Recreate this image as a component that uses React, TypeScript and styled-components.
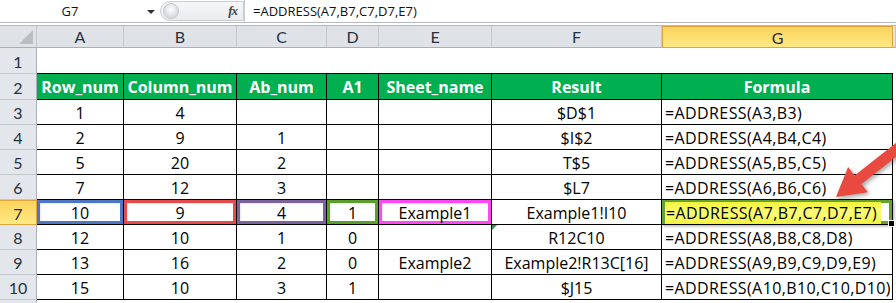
import styled, { createGlobalStyle, css } from "styled-components";

const GlobalStyle = createGlobalStyle`
  html, body {
    margin: 0;
    padding: 0;
    background: #ffffff;
    overflow: hidden;
  }
  body {
    font-family: "Open Sans", Lato, sans-serif;
  }
`;

type CellValue = string | number;

interface Row {
  num: number;
  cells: CellValue[];
}

const COLUMNS = ["A", "B", "C", "D", "E", "F", "G"];
const HEADINGS = ["Row_num", "Column_num", "Ab_num", "A1", "Sheet_name", "Result", "Formula"];

const ROWS: Row[] = [
  { num: 3, cells: [1, 4, "", "", "", "$D$1", "=ADDRESS(A3,B3)"] },
  { num: 4, cells: [2, 9, 1, "", "", "$I$2", "=ADDRESS(A4,B4,C4)"] },
  { num: 5, cells: [5, 20, 2, "", "", "T$5", "=ADDRESS(A5,B5,C5)"] },
  { num: 6, cells: [7, 12, 3, "", "", "$L7", "=ADDRESS(A6,B6,C6)"] },
  { num: 7, cells: [10, 9, 4, 1, "Example1", "Example1!I10", "=ADDRESS(A7,B7,C7,D7,E7)"] },
  { num: 8, cells: [12, 10, 1, 0, "", "R12C10", "=ADDRESS(A8,B8,C8,D8)"] },
  { num: 9, cells: [13, 16, 2, 0, "Example2", "Example2!R13C[16]", "=ADDRESS(A9,B9,C9,D9,E9)"] },
  { num: 10, cells: [15, 10, 3, 1, "", "$J15", "=ADDRESS(A10,B10,C10,D10)"] },
];

// outline colours for the argument cells of row 7
const RINGS: Record<number, string> = {
  0: "#4d76c4",
  1: "#e64a4a",
  2: "#7d62a0",
  3: "#5a9f2a",
  4: "#ff47f5",
};

const Window = styled.div`
  position: relative;
  width: 896px;
  height: 303px;
  overflow: hidden;
  background: #ffffff;
`;

const FormulaBar = styled.div`
  display: flex;
  height: 22px;
  border-bottom: 1px solid #b6bac0;
  background: #ffffff;
`;

const NameBox = styled.div`
  position: relative;
  width: 160px;
  display: flex;
  align-items: center;
  justify-content: center;
  padding-right: 20px;
  box-sizing: border-box;
  font-size: 13px;
  color: #111;
`;

const DropArrow = styled.span`
  position: absolute;
  right: 5px;
  top: 10px;
  width: 0;
  height: 0;
  border-left: 4px solid transparent;
  border-right: 4px solid transparent;
  border-top: 4px solid #333;
`;

const FxPill = styled.div`
  width: 84px;
  margin: 1px 0;
  display: flex;
  align-items: center;
  justify-content: space-between;
  padding: 0 6px 0 2px;
  box-sizing: border-box;
  border: 1px solid #c9ccd0;
  border-radius: 11px 0 0 11px;
  background: linear-gradient(#f6f7f8, #e9ebee);
`;

const Knob = styled.span`
  width: 14px;
  height: 14px;
  border-radius: 50%;
  background: radial-gradient(circle at 50% 40%, #ffffff, #d6d9dd 70%);
  border: 1px solid #c4c7cb;
`;

const Fx = styled.span`
  font-family: "Liberation Serif", serif;
  font-style: italic;
  font-weight: bold;
  font-size: 13px;
  color: #444;
  letter-spacing: -1px;
`;

const FormulaInput = styled.div`
  flex: 1;
  display: flex;
  align-items: center;
  padding-left: 8px;
  border-left: 1px solid #c9ccd0;
  font-size: 13px;
  color: #111;
`;

const Gap = styled.div`
  height: 2px;
  border-bottom: 1px solid #b6bac0;
`;

const Grid = styled.div`
  display: grid;
  grid-template-columns: 37px 87px 113px 90px 52px 113px 170px 231px 3px;
  grid-template-rows: 22px 26px 26px repeat(9, 25px);
`;

const selectedHead = css`
  background: linear-gradient(#fcd35c, #ffe985);
  border-color: #e0a53c;
  color: #1f2a36;
`;

const Corner = styled.div`
  position: relative;
  background: #dfe3e8;
  border-right: 1px solid #c3c8ce;
  border-bottom: 1px solid #a9afb6;
  &::after {
    content: "";
    position: absolute;
    right: 3px;
    bottom: 3px;
    border-left: 14px solid transparent;
    border-bottom: 14px solid #b9bec5;
  }
`;

const ColHead = styled.div<{ $active?: boolean }>`
  display: flex;
  align-items: center;
  justify-content: center;
  background: #dfe3e8;
  border-right: 1px solid #c3c8ce;
  border-bottom: 1px solid #a9afb6;
  font-family: Lato, sans-serif;
  font-size: 16px;
  color: #27313d;
  ${(p) => p.$active && selectedHead}
  ${(p) => p.$active && "border: 1px solid #e0a53c;"}
`;

const RowHead = styled.div<{ $active?: boolean }>`
  display: flex;
  align-items: center;
  justify-content: center;
  padding-top: 1px;
  background: #e3e6ea;
  border-right: 1px solid #a9afb6;
  border-bottom: 1px solid #c3c8ce;
  font-family: Lato, sans-serif;
  font-size: 16px;
  color: #27313d;
  ${(p) => p.$active && selectedHead}
  ${(p) => p.$active && "border-top: 1px solid #e0a53c; border-bottom: 1px solid #e0a53c;"}
`;

const Blank = styled.div<{ $edge?: boolean }>`
  background: #ffffff;
  ${(p) => p.$edge && "border-bottom: 1px solid #000;"}
`;

const Heading = styled.div`
  display: flex;
  align-items: center;
  justify-content: center;
  padding-top: 1px;
  background: #00b050;
  border-right: 1px solid #000;
  border-bottom: 1px solid #000;
  font-size: 16px;
  font-weight: bold;
  color: #ffffff;
  white-space: nowrap;
  overflow: hidden;
`;

const Cell = styled.div<{ $align: "center" | "left"; $ring?: string; $mark?: boolean }>`
  position: relative;
  display: flex;
  align-items: center;
  justify-content: ${(p) => (p.$align === "left" ? "flex-start" : "center")};
  padding: 2px 0 0 ${(p) => (p.$align === "left" ? "3px" : "0")};
  background: #ffffff;
  border-right: 1px solid #000;
  border-bottom: 1px solid #000;
  font-size: 16px;
  letter-spacing: ${(p) => (p.$align === "left" ? "0.4px" : "0")};
  color: #000;
  white-space: nowrap;
  overflow: hidden;
  ${(p) =>
    p.$ring &&
    css`
      box-shadow: inset 0 0 0 3px ${p.$ring}, inset 3px 3px 3px rgba(0, 0, 0, 0.18);
    `}
  ${(p) =>
    p.$mark &&
    css`
      &::before {
        content: "";
        position: absolute;
        left: 0;
        top: 0;
        border-top: 5px solid #2e9a3a;
        border-right: 5px solid transparent;
      }
    `}
`;

const ActiveCell = styled(Cell)`
  overflow: visible;
  box-shadow: inset 0 0 0 3px #66a22f, 1px 1px 3px rgba(0, 0, 0, 0.35);
  z-index: 1;
  &::after {
    content: "";
    position: absolute;
    right: -3px;
    bottom: -3px;
    width: 5px;
    height: 5px;
    background: #000;
    border: 1px solid #fff;
  }
`;

const Marked = styled.span`
  background: linear-gradient(#f2f43a, #fbfb7a 50%, #f2f43a);
  padding: 0 4px 0 1px;
`;

const Arrow = styled.svg`
  position: absolute;
  left: 820px;
  top: 130px;
  pointer-events: none;
  filter: drop-shadow(2px 2px 2px rgba(0, 0, 0, 0.35));
`;

export default function App() {
  return (
    <>
      <GlobalStyle />
      <Window>
        <FormulaBar>
          <NameBox>
            G7
            <DropArrow />
          </NameBox>
          <FxPill>
            <Knob />
            <Fx>fx</Fx>
          </FxPill>
          <FormulaInput>=ADDRESS(A7,B7,C7,D7,E7)</FormulaInput>
        </FormulaBar>
        <Gap />
        <Grid>
          <Corner />
          {COLUMNS.map((c) => (
            <ColHead key={c} $active={c === "G"}>
              {c}
            </ColHead>
          ))}
          <ColHead />

          <RowHead>1</RowHead>
          {COLUMNS.map((c) => (
            <Blank key={c} $edge />
          ))}
          <Blank />

          <RowHead>2</RowHead>
          {HEADINGS.map((h) => (
            <Heading key={h}>{h}</Heading>
          ))}
          <Blank />

          {ROWS.map((row) => {
            const active = row.num === 7;
            return [
              <RowHead key={`h${row.num}`} $active={active}>
                {row.num}
              </RowHead>,
              ...row.cells.map((v, i) => {
                const key = `${row.num}-${i}`;
                if (active && i === 6) {
                  return (
                    <ActiveCell key={key} $align="left">
                      <Marked>{v}</Marked>
                    </ActiveCell>
                  );
                }
                return (
                  <Cell
                    key={key}
                    $align={i === 6 ? "left" : "center"}
                    $ring={active ? RINGS[i] : undefined}
                    $mark={row.num === 8 && i === 5}
                  >
                    {v}
                  </Cell>
                );
              }),
              <Blank key={`e${row.num}`} />,
            ];
          })}

          {/* row 11 is only a sliver at the bottom edge */}
          <RowHead />
          {COLUMNS.map((c) => (
            <Blank key={c} />
          ))}
          <Blank />
        </Grid>

        <Arrow width="90" height="80" viewBox="820 130 90 80">
          <polygon
            points="836,197 848.1,167.1 854.6,175.4 901.8,138.4 908.6,147 861.4,184 867.9,192.3"
            fill="#e84a40"
          />
        </Arrow>
      </Window>
    </>
  );
}
